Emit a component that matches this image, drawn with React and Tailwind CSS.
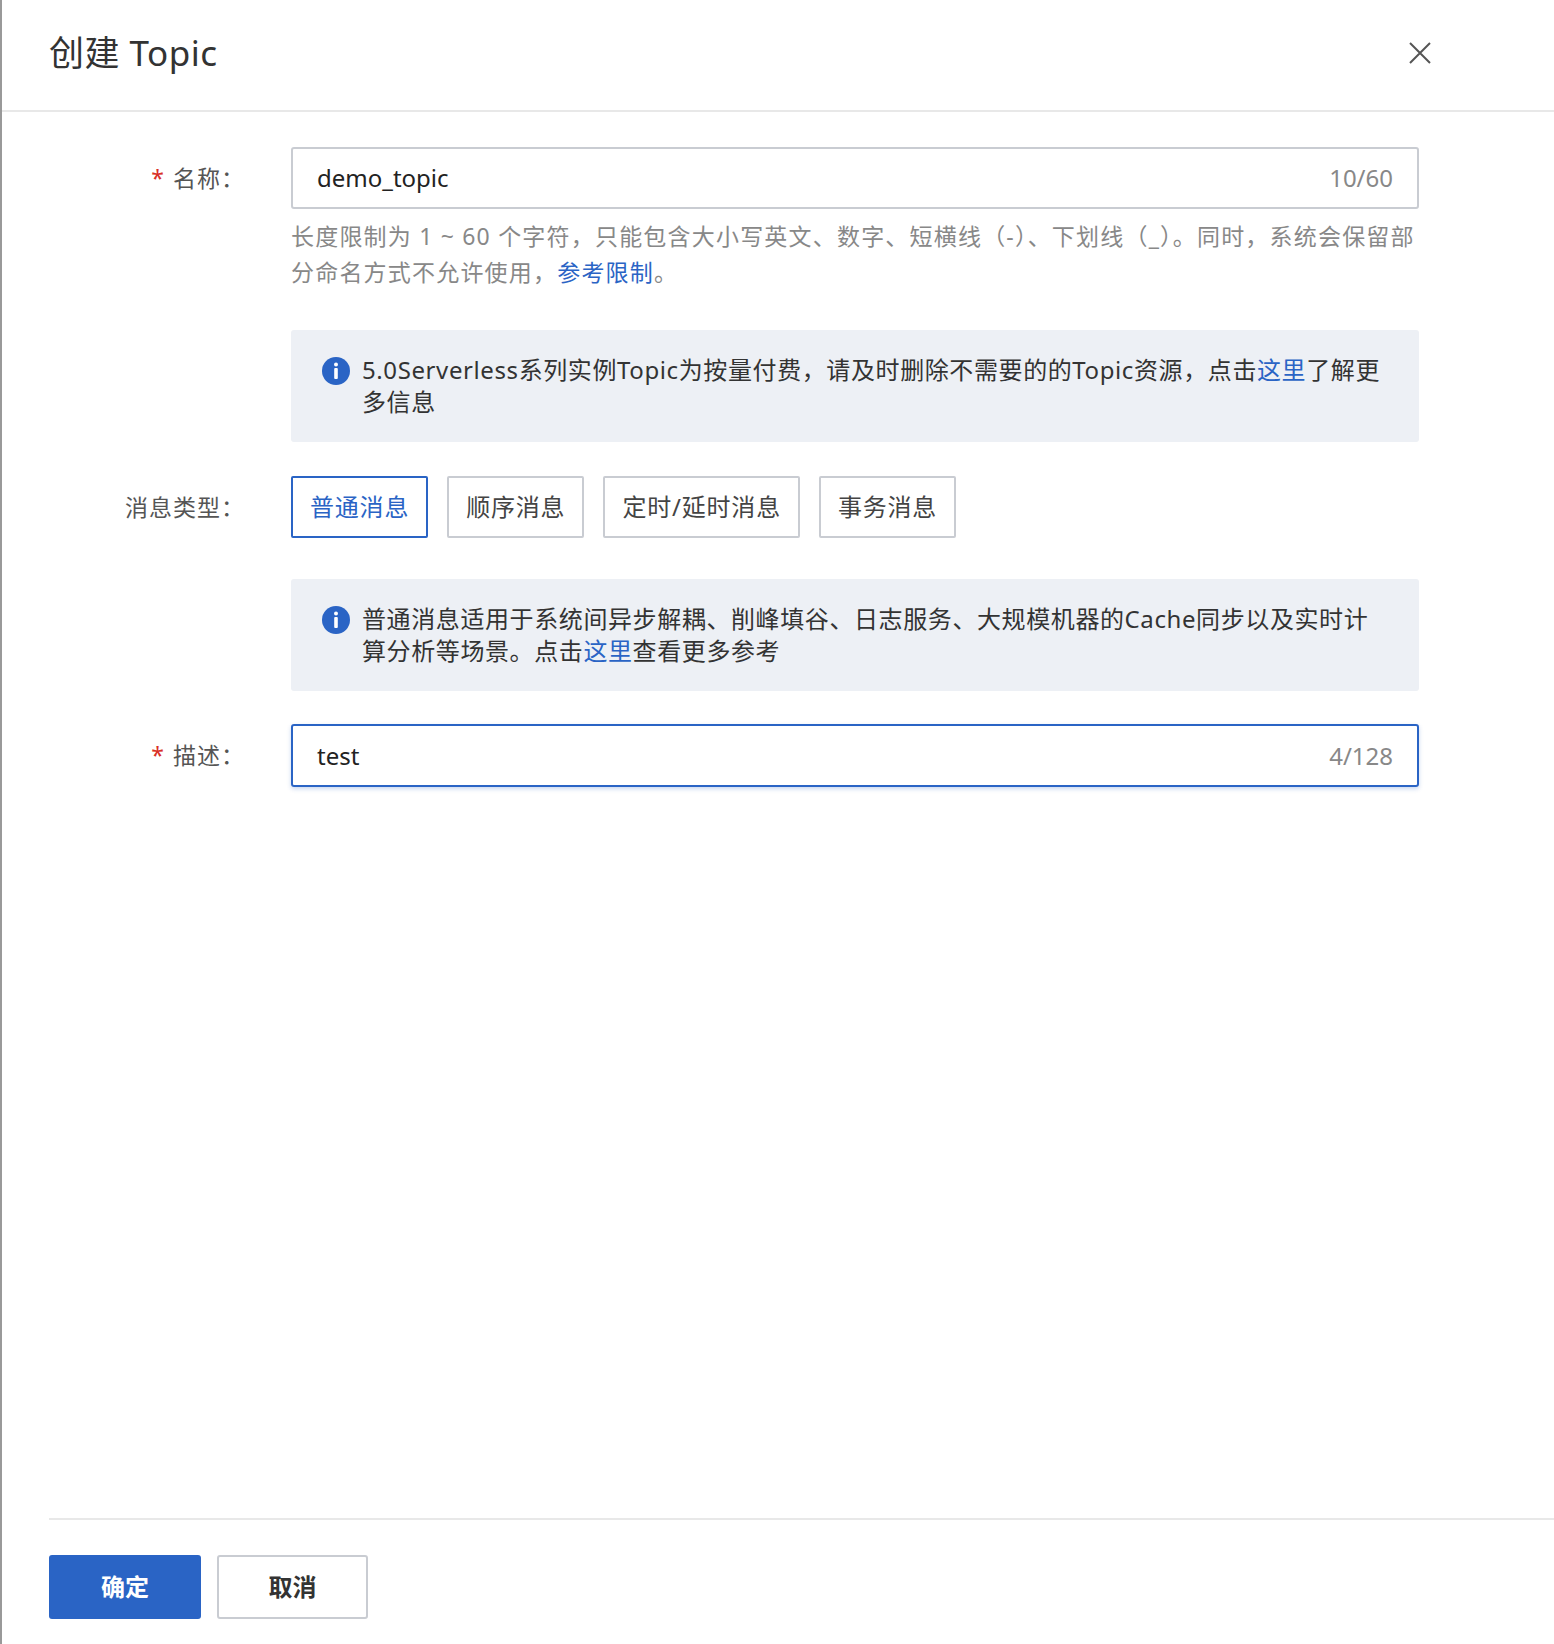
import React from "react";

const font = { fontFamily: '"Noto Sans", "Noto Sans CJK SC", sans-serif' };

const InfoIcon = () => (
  <svg width="28" height="28" viewBox="0 0 28 28" className="shrink-0 mt-[3px]">
    <circle cx="14" cy="14" r="14" fill="#2a64c5" />
    <circle cx="14" cy="7.5" r="2" fill="#fff" />
    <rect x="12.2" y="11" width="3.6" height="11" rx="1" fill="#fff" />
  </svg>
);

const Label = ({ req, children }) => (
  <div className="w-[243px] shrink-0 text-right text-[23px] tracking-[1px] text-[#555] leading-[62px]">
    {req && <span className="text-[#d93026] mr-[8px]">*</span>}
    {children}：
  </div>
);

const Info = ({ children }) => (
  <div className="flex gap-[12px] bg-[#edf0f5] rounded-[3px] pl-[31px] pr-[36px] py-[24px] text-[24px] tracking-[0.6px] leading-[32px] text-[#333]">
    <InfoIcon />
    <div>{children}</div>
  </div>
);

const Link = ({ children }) => <span className="text-[#2a64c5]">{children}</span>;

export default function App() {
  const types = ["普通消息", "顺序消息", "定时/延时消息", "事务消息"];
  return (
    <div style={font} className="w-[1554px] h-[1644px] bg-white border-l-2 border-[#999] flex flex-col">
      <div className="h-[112px] flex items-center justify-between pl-[47px] pr-[122px] border-b-2 border-[#e8e8e8]">
        <h1 className="text-[35px] text-[#333] tracking-[0.5px] -mt-[4px]">创建 Topic</h1>
        <svg width="24" height="24" viewBox="0 0 24 24" className="-mt-[4px]">
          <path d="M2 2L22 22M22 2L2 22" stroke="#555" strokeWidth="2" />
        </svg>
      </div>
      <div className="flex-1 pr-[135px] pt-[35px]">
        <div className="flex">
          <Label req>名称</Label>
          <div className="flex-1 ml-[46px]">
            <div className="h-[62px] border-2 border-[#c9ccd2] rounded-[3px] flex items-center justify-between px-[24px] text-[24px]">
              <span className="text-[#222]">demo_topic</span>
              <span className="text-[#888]">10/60</span>
            </div>
            <p className="mt-[9px] text-[23px] tracking-[1.2px] leading-[36px] text-[#888]">
              长度限制为 1 ~ 60 个字符，只能包含大小写英文、数字、短横线（-）、下划线（_）。同时，系统会保留部分命名方式不允许使用，<Link>参考限制</Link>。
            </p>
            <div className="mt-[40px]">
              <Info>
                5.0Serverless系列实例Topic为按量付费，请及时删除不需要的的Topic资源，点击<Link>这里</Link>了解更多信息
              </Info>
            </div>
          </div>
        </div>
        <div className="flex mt-[34px]">
          <Label>消息类型</Label>
          <div className="flex-1 ml-[46px]">
            <div className="flex gap-[19px]">
              {types.map((t, i) => (
                <div
                  key={t}
                  className={
                    i === 0
                      ? "h-[62px] px-[17px] flex items-center border-2 border-[#2a64c5] text-[#2a64c5] rounded-[2px] text-[24px] tracking-[0.8px]"
                      : "h-[62px] px-[17px] flex items-center border-2 border-[#c9ccd2] text-[#444] rounded-[2px] text-[24px] tracking-[0.8px]"
                  }
                >
                  {t}
                </div>
              ))}
            </div>
            <div className="mt-[41px]">
              <Info>
                普通消息适用于系统间异步解耦、削峰填谷、日志服务、大规模机器的Cache同步以及实时计算分析等场景。点击<Link>这里</Link>查看更多参考
              </Info>
            </div>
          </div>
        </div>
        <div className="flex mt-[33px]">
          <Label req>描述</Label>
          <div className="flex-1 ml-[46px]">
            <div className="h-[63px] border-2 border-[#2a64c5] rounded-[3px] flex items-center justify-between px-[24px] text-[24px] shadow-[0_2px_4px_rgba(42,100,197,0.25)]">
              <span className="text-[#222]">test</span>
              <span className="text-[#888]">4/128</span>
            </div>
          </div>
        </div>
      </div>
      <div className="ml-[47px] border-t-2 border-[#e8e8e8] pt-[35px] pb-[25px] flex gap-[16px]">
        <button className="w-[152px] h-[64px] bg-[#2a64c5] text-white text-[24px] font-bold rounded-[3px]">确定</button>
        <button className="w-[151px] h-[64px] border-2 border-[#c9ccd2] text-[#333] text-[24px] font-bold rounded-[3px] bg-white">取消</button>
      </div>
    </div>
  );
}
